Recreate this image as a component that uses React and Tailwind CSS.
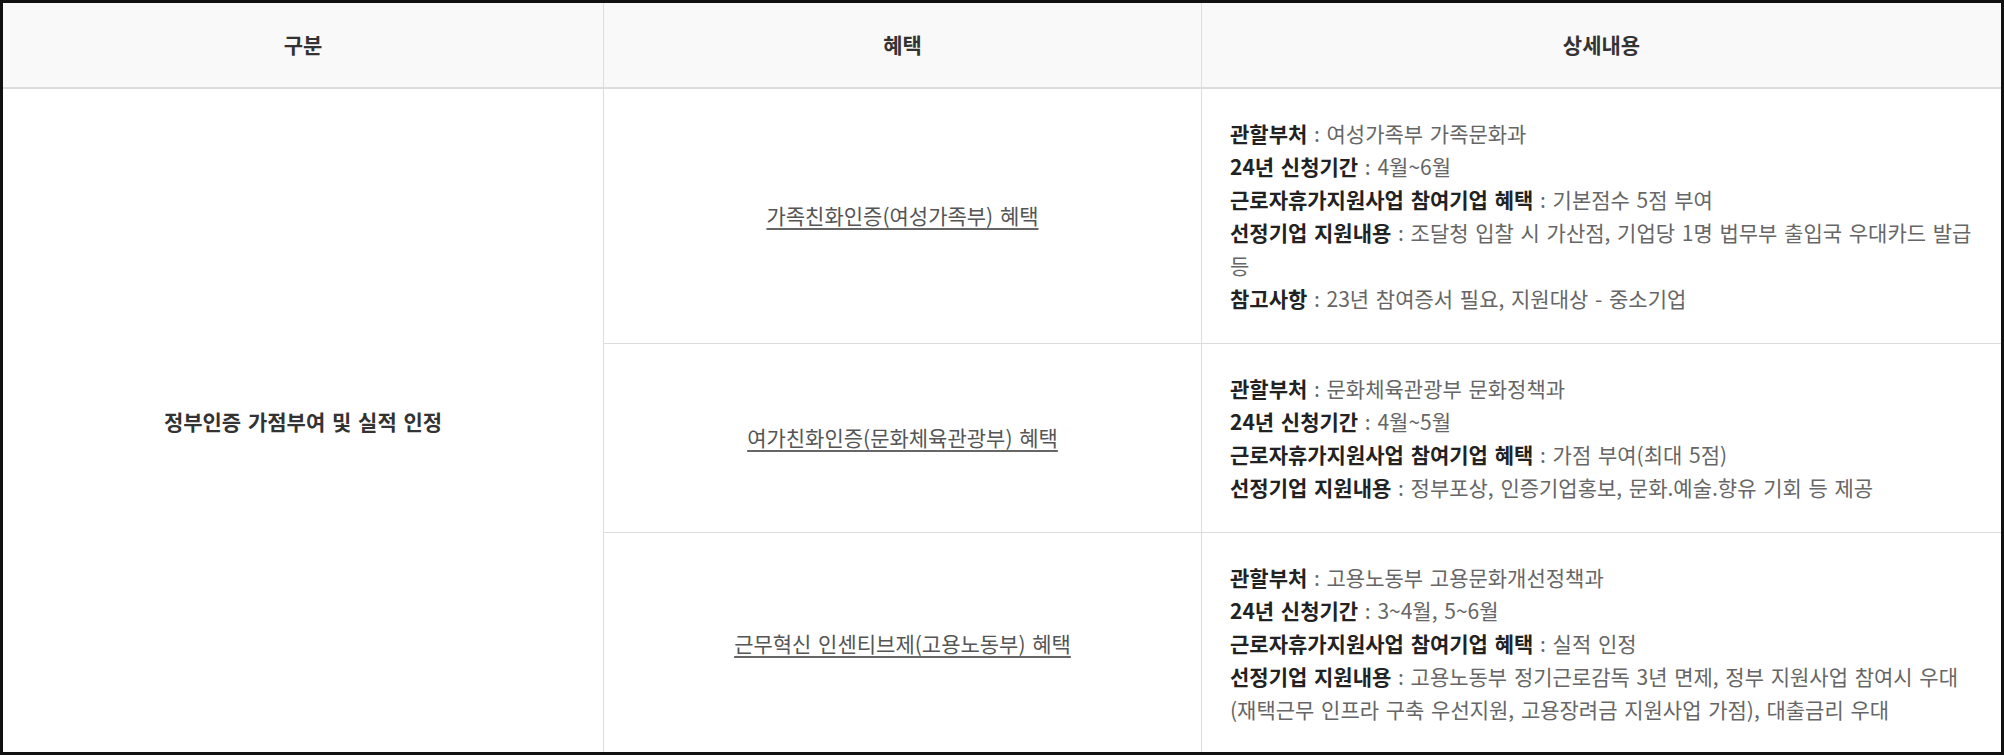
import React from 'react';

const rows = [
  {
    title: '가족친화인증(여성가족부) 혜택',
    items: [
      ['관할부처', '여성가족부 가족문화과'],
      ['24년 신청기간', '4월~6월'],
      ['근로자휴가지원사업 참여기업 혜택', '기본점수 5점 부여'],
      ['선정기업 지원내용', '조달청 입찰 시 가산점, 기업당 1명 법무부 출입국 우대카드 발급 등'],
      ['참고사항', '23년 참여증서 필요, 지원대상 - 중소기업'],
    ],
  },
  {
    title: '여가친화인증(문화체육관광부) 혜택',
    items: [
      ['관할부처', '문화체육관광부 문화정책과'],
      ['24년 신청기간', '4월~5월'],
      ['근로자휴가지원사업 참여기업 혜택', '가점 부여(최대 5점)'],
      ['선정기업 지원내용', '정부포상, 인증기업홍보, 문화.예술.향유 기회 등 제공'],
    ],
  },
  {
    title: '근무혁신 인센티브제(고용노동부) 혜택',
    items: [
      ['관할부처', '고용노동부 고용문화개선정책과'],
      ['24년 신청기간', '3~4월, 5~6월'],
      ['근로자휴가지원사업 참여기업 혜택', '실적 인정'],
      ['선정기업 지원내용', '고용노동부 정기근로감독 3년 면제, 정부 지원사업 참여시 우대 (재택근무 인프라 구축 우선지원, 고용장려금 지원사업 가점), 대출금리 우대'],
    ],
  },
];

export default function App() {
  return (
    <div className="w-[2004px] h-[755px] overflow-hidden border-[3px] border-[#111] bg-white font-['Noto_Sans_CJK_KR',sans-serif] text-[21px] [word-spacing:2px] break-keep">
      <div className="grid grid-cols-[601px_598px_1fr]">
        {/* Header */}
        {['구분', '혜택', '상세내용'].map((h, i) => (
          <div
            key={h}
            className={`h-[86px] flex items-center justify-center bg-[#f9f9f9] border-b-2 border-[#ddd] font-bold text-[#333] ${i < 2 ? 'border-r' : ''}`}
          >
            {h}
          </div>
        ))}

        {/* Category */}
        <div className="row-span-3 flex items-center justify-center border-r border-[#ddd] font-bold text-[#333]">
          정부인증 가점부여 및 실적 인정
        </div>

        {rows.map((r, idx) => {
          const last = idx === rows.length - 1;
          return (
            <React.Fragment key={r.title}>
              <div className={`flex items-center justify-center border-r border-[#ddd] ${last ? '' : 'border-b'}`}>
                <span className="text-[#555] underline underline-offset-[4px] decoration-[#666]">{r.title}</span>
              </div>
              <div className={`pl-[28px] pr-[20px] py-[28px] leading-[33px] border-[#ddd] ${last ? '' : 'border-b'}`}>
                {r.items.map(([k, v]) => (
                  <p key={k} className="text-[#666]">
                    <span className="font-bold text-[#222]">{k}</span> : {v}
                  </p>
                ))}
              </div>
            </React.Fragment>
          );
        })}
      </div>
    </div>
  );
}
